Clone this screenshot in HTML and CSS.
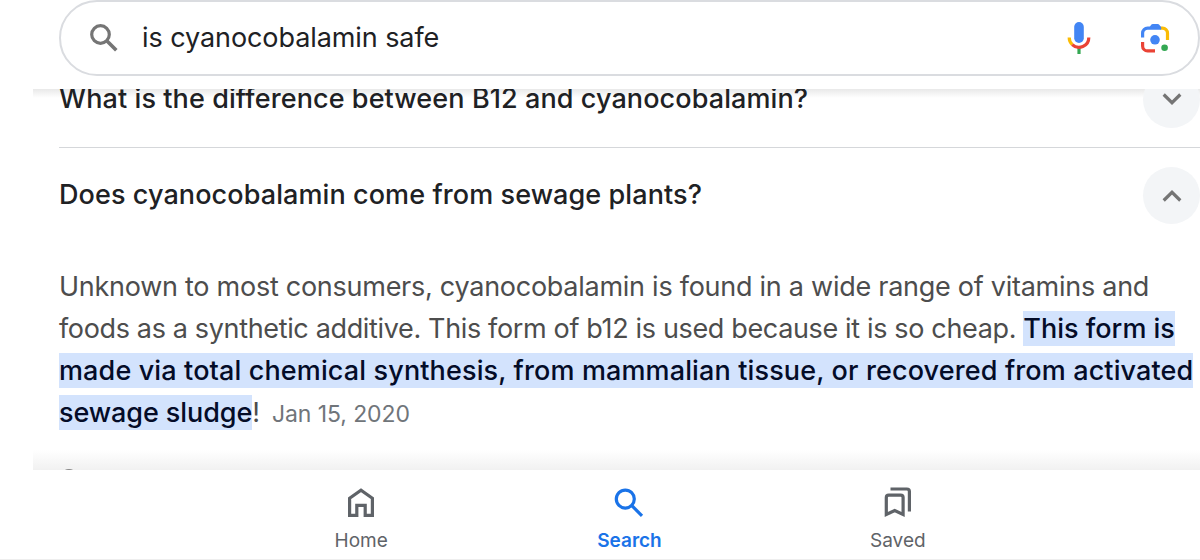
FILE: index.html
```html
<!DOCTYPE html>
<html lang="en">
<head>
    <meta charset="UTF-8">
    <meta name="viewport" content="width=device-width, initial-scale=1.0">
    <title>is cyanocobalamin safe</title>
    <link rel="stylesheet" href="styles.css">
</head>
<body>
    <header class="header">
        <div class="search-box">
            <svg class="search-icon" width="28" height="28" viewBox="0 0 28 28" fill="none" stroke="#757575">
                <circle cx="10.5" cy="10.5" r="8.8" stroke-width="3.2"/>
                <path d="M16.5 16.5L26.3 26.3" stroke-width="3.6"/>
            </svg>
            <span class="query">is cyanocobalamin safe</span>
            <svg class="mic-icon" width="24" height="34" viewBox="0 0 24 34" fill="none" stroke-width="3.2">
                <rect x="7.2" y="1" width="9.6" height="21" rx="4.8" fill="#4285f4"/>
                <path d="M12 26V33" stroke="#34a853"/>
                <path d="M2.2 16.5A9.8 9.8 0 0 0 5.3 23.7" stroke="#fbbc04"/>
                <path d="M5.2 23.6A9.8 9.8 0 0 0 21.8 16.5" stroke="#ea4335"/>
            </svg>
            <svg class="lens-icon" width="30" height="30" viewBox="0 0 30 30" fill="none" stroke-width="3.2">
                <path d="M20.5 5.1H22.5A5 5 0 0 1 27.5 10.1V17" stroke="#fbbc04"/>
                <path d="M2.6 14.5V10.1A5 5 0 0 1 7.6 5.1H21" stroke="#4285f4"/>
                <path d="M8.8 5.5L11 2.1Q11.6 1 13 1H17.5Q18.9 1 19.5 2.1L21.7 5.5Z" fill="#4285f4"/>
                <path d="M2.6 19V22.9A5 5 0 0 0 7.6 27.9H15" stroke="#ea4335"/>
                <circle cx="15" cy="16.8" r="4.8" fill="#4285f4"/>
                <circle cx="24.6" cy="24.8" r="3.3" fill="#34a853"/>
            </svg>
        </div>
    </header>

    <main class="results">
        <div class="question">
            <h2 class="question-title">What is the difference between B12 and cyanocobalamin?</h2>
            <button class="toggle">
                <svg width="20" height="14" viewBox="0 0 20 14" fill="none" stroke="#757575" stroke-width="3.2"><path d="M1.7 2.5L10 10.7L18.3 2.5"/></svg>
            </button>
        </div>
        <div class="question open">
            <h2 class="question-title">Does cyanocobalamin come from sewage plants?</h2>
            <button class="toggle">
                <svg width="20" height="14" viewBox="0 0 20 14" fill="none" stroke="#757575" stroke-width="3.2"><path d="M1.7 11.5L10 3.3L18.3 11.5"/></svg>
            </button>
        </div>
        <p class="answer">
            <span class="line-one">Unknown to most consumers, cyanocobalamin is found in a wide range of vitamins and</span><br>
            <span class="line-two">foods as a synthetic additive. This form of b12 is used because it is so cheap. </span><mark>This form is</mark><br>
            <mark class="line-three">made via total chemical synthesis, from mammalian tissue, or recovered from activated</mark><br>
            <mark class="line-four">sewage sludge</mark>!<span class="date">Jan 15, 2020</span>
        </p>
        <div class="source-icon"></div>
    </main>

    <nav class="bottom-nav">
        <a class="nav-item">
            <svg width="32" height="32" viewBox="0 0 32 32" fill="none" stroke="#5f6368" stroke-width="3.2">
                <path d="M4.6 11.3L16 3.1L27.4 11.3V28.4H20.2V18.4H11.8V28.4H4.6Z"/>
            </svg>
            <span>Home</span>
        </a>
        <a class="nav-item active">
            <svg width="32" height="32" viewBox="0 0 32 32" fill="none" stroke="#1a73e8" stroke-width="3.2">
                <circle cx="12.3" cy="12.1" r="9"/>
                <path d="M18.6 18.4L29 28.8"/>
            </svg>
            <span>Search</span>
        </a>
        <a class="nav-item">
            <svg width="32" height="32" viewBox="0 0 32 32" fill="none" stroke="#5f6368" stroke-width="3.2">
                <path d="M4.3 27.5V10.6Q4.3 8.2 6.7 8.2H18.7Q21.1 8.2 21.1 10.6V27.5L12.7 23.6Z"/>
                <path d="M8.5 2H24.8Q27.4 2 27.4 4.6V24.5"/>
            </svg>
            <span>Saved</span>
        </a>
    </nav>
</body>
</html>
```
FILE: styles.css
```css
* {
    box-sizing: border-box;
}

body {
    display: flex;
    flex-direction: column;
    width: 1200px;
    height: 560px;
    margin: 0;
    background: #fff;
    color: #202124;
    font-family: Inter, "Open Sans", sans-serif;
    overflow: hidden;
}

.header {
    flex: none;
    height: 89px;
    padding-left: 59px;
}

.search-box {
    display: flex;
    align-items: center;
    height: 76px;
    padding: 0 28px 0 29px;
    border: 2px solid #dadce0;
    border-radius: 38px;
}

.search-icon {
    margin-right: 24px;
}

.query {
    flex: 1;
    padding-bottom: 1px;
    font-size: 27px;
    letter-spacing: -0.08px;
    white-space: nowrap;
}

.mic-icon {
    margin-right: 49px;
}

/* shadows of the two bars fall on the scrolling area */
.results {
    flex: none;
    height: 381px;
    margin-left: 33px;
    padding-left: 26px;
    overflow: hidden;
    background:
        linear-gradient(#e9e9e9, rgba(255, 255, 255, 0)) top / 100% 9px no-repeat,
        linear-gradient(rgba(255, 255, 255, 0), #f1f1f1) bottom / 100% 20px no-repeat;
}

.question {
    display: flex;
    justify-content: space-between;
    align-items: center;
    height: 77px;
    margin-top: -18px;
    padding-bottom: 20px;
    border-bottom: 1px solid #d5d7da;
}

.question.open {
    margin-top: 19px;
    border-bottom: none;
}

.question-title {
    margin: 0;
    padding-bottom: 2px;
    font-size: 27px;
    font-weight: 500;
    letter-spacing: 0.09px;
    white-space: nowrap;
}

.toggle {
    display: flex;
    flex: none;
    justify-content: center;
    align-items: center;
    width: 57px;
    height: 57px;
    padding: 0;
    border: none;
    border-radius: 50%;
    background: #f3f5f7;
}

.answer {
    margin: 22px 0 0;
    color: #4d4d4d;
    font-size: 27px;
    line-height: 42px;
    white-space: nowrap;
}

.answer mark {
    padding: 1px 0;
    background: #d3e3fd;
    color: #040c28;
    font-weight: 500;
}

.line-one {
    letter-spacing: -0.265px;
}

.line-two {
    letter-spacing: -0.35px;
}

.answer .line-three {
    letter-spacing: 0.13px;
}

.answer .line-four {
    letter-spacing: -0.08px;
}

.date {
    margin-left: 12px;
    color: #70757a;
    font-size: 23px;
    letter-spacing: -0.1px;
}

.source-icon {
    width: 18px;
    height: 18px;
    margin: 34px 0 0 1px;
    border: 2px solid #888;
    border-radius: 50%;
}

.bottom-nav {
    display: flex;
    flex: none;
    height: 90px;
    padding: 17px 168px 0 227px;
    border-bottom: 1px solid #eee;
}

.nav-item {
    display: flex;
    flex: 1;
    flex-direction: column;
    align-items: center;
    gap: 9px;
    color: #5f6368;
    font-size: 19px;
    line-height: 26px;
}

.nav-item.active {
    color: #1a73e8;
    font-weight: 600;
}
```
